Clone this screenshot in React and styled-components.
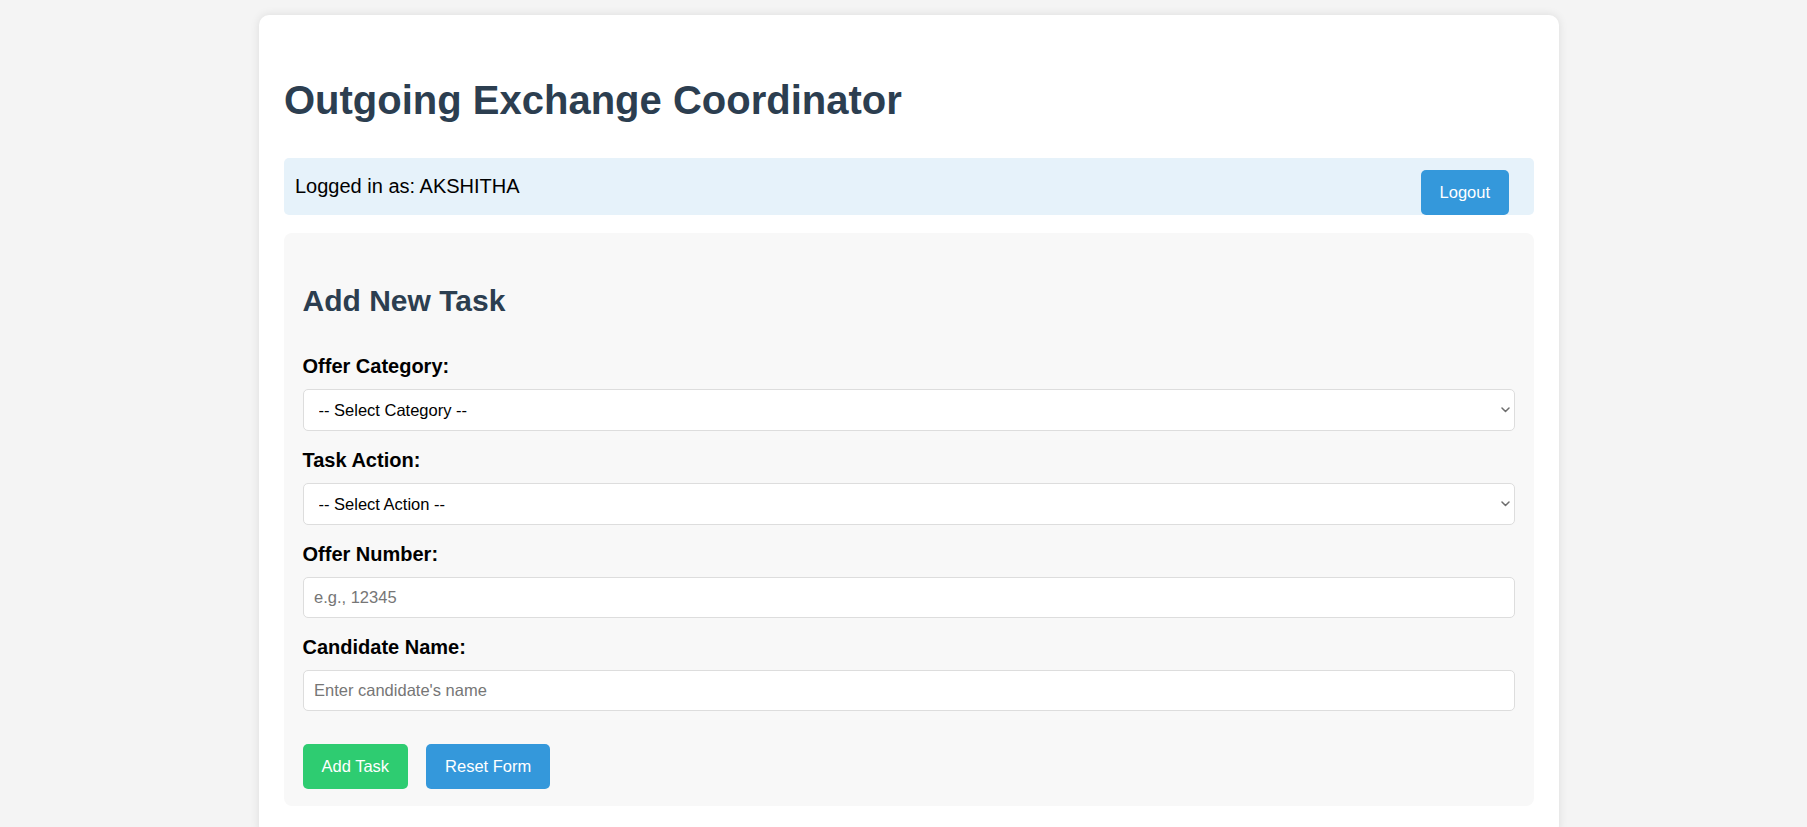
import React from "react";
import styled, { createGlobalStyle } from "styled-components";

const GlobalStyle = createGlobalStyle`
  html, body {
    margin: 0;
    padding: 0;
    background: #f4f4f4;
    font-family: "Liberation Sans", Arial, sans-serif;
  }
  * { box-sizing: border-box; }
`;

const Page = styled.div`
  display: flex;
  justify-content: center;
  padding: 15px 0 0 11px;
`;

const Card = styled.div`
  width: 1300px;
  background: #ffffff;
  border-radius: 10px;
  box-shadow: 0 0 10px rgba(0, 0, 0, 0.1);
  padding: 25px 25px 30px;
`;

const Title = styled.h1`
  margin: 37.4px 0 35px;
  font-size: 40px;
  line-height: 46px;
  font-weight: 700;
  color: #2c3e50;
`;

const UserBar = styled.div`
  display: flex;
  justify-content: space-between;
  height: 56.7px;
  padding: 0 25px 0 11px;
  background: #e6f2fa;
  border-radius: 5px;
`;

const UserText = styled.span`
  align-self: center;
  font-size: 20px;
  line-height: 23px;
  color: #000;
`;

const Button = styled.button`
  height: ${(p) => p.$h || 44.4}px;
  padding: 0 19px;
  border: none;
  border-radius: 5px;
  background: ${(p) => p.$bg};
  color: #fff;
  font-family: "Liberation Sans", Arial, sans-serif;
  font-size: 16.5px;
  cursor: pointer;
`;

const LogoutButton = styled(Button)`
  align-self: flex-end;
`;

const Panel = styled.section`
  margin-top: 18px;
  background: #f8f8f8;
  border-radius: 8px;
  padding: 50px 19px 17.5px 18.5px;
`;

const SectionTitle = styled.h2`
  margin: 0 0 37px;
  font-size: 30px;
  line-height: 35px;
  font-weight: 700;
  color: #2c3e50;
`;

const Field = styled.div`
  margin-bottom: ${(p) => (p.$last ? 33 : 17.6)}px;
`;

const Label = styled.label`
  display: block;
  margin-bottom: 11.4px;
  font-size: 20px;
  line-height: 23px;
  font-weight: 700;
  color: #000;
`;

const SelectWrap = styled.div`
  position: relative;
`;

const Select = styled.select`
  display: block;
  width: 100%;
  height: 42px;
  padding: 0 30px 0 15px;
  border: 1px solid #dddddd;
  border-radius: 5px;
  background: #fff;
  color: #000;
  font-family: "Liberation Sans", Arial, sans-serif;
  font-size: 16.5px;
  appearance: none;
  -webkit-appearance: none;
`;

const Chevron = styled.svg`
  position: absolute;
  right: 5px;
  top: 50%;
  width: 9px;
  height: 6px;
  margin-top: -3px;
  pointer-events: none;
`;

const Input = styled.input`
  display: block;
  width: 100%;
  height: 41px;
  padding: 0 10.5px;
  border: 1px solid #dddddd;
  border-radius: 5px;
  background: #fff;
  color: #000;
  font-family: "Liberation Sans", Arial, sans-serif;
  font-size: 16.5px;
  &::placeholder {
    color: #767676;
  }
`;

const ButtonRow = styled.div`
  display: flex;
  gap: 18px;
`;

function ArrowSelect({ id, children }) {
  return (
    <SelectWrap>
      <Select id={id} defaultValue="">
        {children}
      </Select>
      <Chevron viewBox="0 0 9 6" aria-hidden="true">
        <path d="M1 1 L4.5 4.5 L8 1" fill="none" stroke="#6e6e6e" strokeWidth="1.5" strokeLinecap="round" strokeLinejoin="round" />
      </Chevron>
    </SelectWrap>
  );
}

export default function App() {
  return (
    <>
      <GlobalStyle />
      <Page>
        <Card>
          <Title>Outgoing Exchange Coordinator</Title>
          <UserBar>
            <UserText>Logged in as: AKSHITHA</UserText>
            <LogoutButton $bg="#3498db" $h={45}>Logout</LogoutButton>
          </UserBar>
          <Panel>
            <SectionTitle>Add New Task</SectionTitle>
            <Field>
              <Label htmlFor="cat">Offer Category:</Label>
              <ArrowSelect id="cat">
                <option value="">-- Select Category --</option>
              </ArrowSelect>
            </Field>
            <Field>
              <Label htmlFor="act">Task Action:</Label>
              <ArrowSelect id="act">
                <option value="">-- Select Action --</option>
              </ArrowSelect>
            </Field>
            <Field>
              <Label htmlFor="num">Offer Number:</Label>
              <Input id="num" placeholder="e.g., 12345" />
            </Field>
            <Field $last>
              <Label htmlFor="name">Candidate Name:</Label>
              <Input id="name" placeholder="Enter candidate's name" />
            </Field>
            <ButtonRow>
              <Button $bg="#2ecc71">Add Task</Button>
              <Button $bg="#3498db">Reset Form</Button>
            </ButtonRow>
          </Panel>
        </Card>
      </Page>
    </>
  );
}
